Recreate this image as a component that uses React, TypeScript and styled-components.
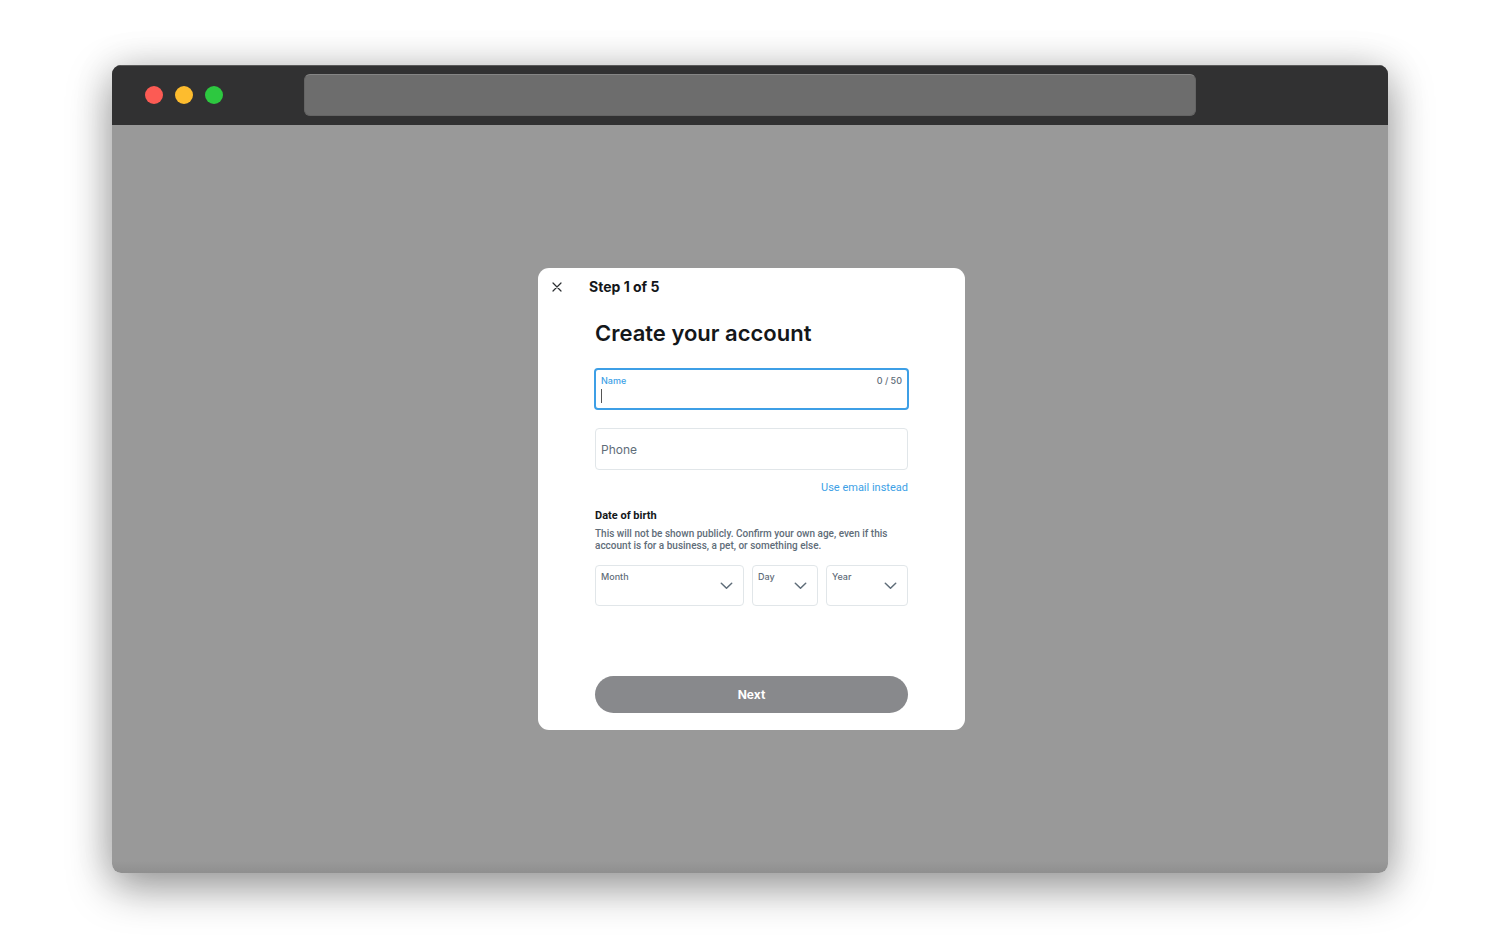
import React from "react";
import styled, { createGlobalStyle } from "styled-components";

const blue = "#3d9fe6";
const ink = "#14171a";
const slate = "#5f6d79";
const line = "#e1e6e9";
const copyFont = `Roboto, "Liberation Sans", sans-serif`;

const GlobalStyle = createGlobalStyle`
  *, *::before, *::after { box-sizing: border-box; }
  body {
    margin: 0;
    background: #fff;
    color: ${ink};
    font-family: Inter, "Liberation Sans", sans-serif;
  }
  button, input, select { font: inherit; color: inherit; }
`;

const Page = styled.div`
  min-height: 100vh;
  display: flex;
  padding: 65px 112px;
`;

const BrowserWindow = styled.div`
  flex: 1;
  display: flex;
  flex-direction: column;
  overflow: hidden;
  border-radius: 9px;
  background: linear-gradient(to top, #8f8f8f, #999 12px);
  box-shadow: 0 14px 44px rgba(0, 0, 0, 0.4), 0 0 40px rgba(0, 0, 0, 0.1);
`;

const TitleBar = styled.header`
  display: grid;
  grid-template-columns: 192px 1fr 192px;
  align-items: center;
  height: 60px;
  padding-bottom: 1px;
  background: #313132;
  box-shadow: inset 0 1px #5a5a5a;
`;

const Lights = styled.div`
  display: flex;
  gap: 12px;
  padding-left: 33px;
`;

const Light = styled.span<{ $color: string }>`
  width: 18px;
  height: 18px;
  border-radius: 50%;
  background: ${(p) => p.$color};
`;

const AddressBar = styled.input`
  width: 100%;
  height: 42px;
  padding: 0 16px;
  border: 1px solid #646464;
  border-top-color: #858585;
  border-radius: 6px;
  background: #6d6d6d;
  outline: none;
`;

const Stage = styled.main`
  flex: 1;
  display: flex;
  align-items: center;
  justify-content: center;
  padding-left: 3px;
`;

const Dialog = styled.section`
  width: 427px;
  padding-bottom: 17px;
  border-radius: 11px;
  background: #fff;
`;

const DialogHeader = styled.div`
  display: flex;
  align-items: center;
  gap: 23px;
  height: 38px;
  padding-left: 10px;
`;

const CloseButton = styled.button`
  display: flex;
  padding: 4px;
  border: 0;
  background: none;
  cursor: pointer;
`;

const Step = styled.h2`
  margin: 0;
  font-size: 14px;
  line-height: 20px;
  font-weight: 700;
`;

const Form = styled.form`
  display: flex;
  flex-direction: column;
  padding: 13px 57px 0;
`;

const Title = styled.h1`
  margin: 0 0 21px;
  font-size: 22px;
  line-height: 28px;
  font-weight: 600;
`;

const ActiveField = styled.div`
  display: flex;
  flex-direction: column;
  height: 42px;
  margin: 0 -1px;
  padding: 5px 5px 3px;
  border: 2px solid ${blue};
  border-radius: 4px;
`;

const FieldTop = styled.div`
  display: flex;
  justify-content: space-between;
`;

const Label = styled.label<{ $active?: boolean }>`
  font-size: 9px;
  line-height: 12px;
  font-weight: 500;
  color: ${(p) => (p.$active ? blue : slate)};
`;

const Counter = styled.span`
  font-size: 9px;
  line-height: 12px;
  font-weight: 500;
  color: ${slate};
`;

const Entry = styled.div`
  display: flex;
  align-items: center;
  flex: 1;
`;

const Caret = styled.span`
  width: 1px;
  height: 14px;
  background: #555;
`;

const TextInput = styled.input`
  flex: 1;
  min-width: 0;
  height: 16px;
  padding: 0;
  border: 0;
  outline: none;
  background: none;
  font-size: 12px;
  caret-color: transparent;
`;

const PhoneInput = styled.input`
  height: 42px;
  margin-top: 18px;
  padding: 0 5px;
  border: 1px solid ${line};
  border-radius: 4px;
  outline: none;
  font-size: 12px;
  &::placeholder { color: ${slate}; opacity: 1; }
`;

const SwapLink = styled.a`
  align-self: flex-end;
  margin-top: 11px;
  font-family: ${copyFont};
  font-size: 11px;
  line-height: 14px;
  color: ${blue};
  text-decoration: none;
`;

const BirthGroup = styled.fieldset`
  min-width: 0;
  margin: 14px 0 0;
  padding: 0;
  border: 0;
  font-family: ${copyFont};
`;

const Legend = styled.legend`
  padding: 0;
  font-size: 11px;
  line-height: 14px;
  font-weight: 700;
`;

const Hint = styled.p`
  margin: 5px 0 13px;
  font-size: 10px;
  line-height: 12px;
  font-weight: 500;
  color: ${slate};
`;

const Selects = styled.div`
  display: grid;
  grid-template-columns: 149fr 66fr 82fr;
  gap: 8px;
  font-family: Inter, "Liberation Sans", sans-serif;
`;

const SelectBox = styled.div`
  display: grid;
  grid-template: 1fr / 1fr auto;
  height: 41px;
  border: 1px solid ${line};
  border-radius: 4px;

  label {
    grid-area: 1 / 1;
    padding: 5px 0 0 5px;
    pointer-events: none;
  }
  select {
    grid-area: 1 / 1 / 2 / 3;
    width: 100%;
    height: 100%;
    padding: 14px 5px 0;
    border: 0;
    outline: none;
    appearance: none;
    background: none;
    font-size: 12px;
  }
  svg {
    grid-area: 1 / 2;
    align-self: center;
    margin-right: 10px;
    pointer-events: none;
  }
`;

const NextButton = styled.button`
  height: 37px;
  margin-top: 70px;
  border: 0;
  border-radius: 19px;
  background: #88898c;
  color: #fff;
  font-size: 12px;
  font-weight: 700;
`;

const months = [
  "January", "February", "March", "April", "May", "June", "July",
  "August", "September", "October", "November", "December",
];
const days = Array.from({ length: 31 }, (_, i) => String(i + 1));
const years = Array.from({ length: 100 }, (_, i) => String(2022 - i));

function DatePart({ id, label, options }: { id: string; label: string; options: string[] }) {
  return (
    <SelectBox>
      <select id={id} defaultValue="">
        <option value="" />
        {options.map((o) => (
          <option key={o}>{o}</option>
        ))}
      </select>
      <Label htmlFor={id}>{label}</Label>
      <svg width="13" height="9" viewBox="0 0 13 9" fill="none" stroke="#5f6d79" strokeWidth="1.5" strokeLinecap="round" strokeLinejoin="round">
        <path d="M1.3 2.2 6.5 7.2 11.7 2.2" />
      </svg>
    </SelectBox>
  );
}

export default function App() {
  return (
    <Page>
      <GlobalStyle />
      <BrowserWindow>
        <TitleBar>
          <Lights>
            <Light $color="#fc5b54" />
            <Light $color="#fdbc2e" />
            <Light $color="#2dc840" />
          </Lights>
          <AddressBar type="text" aria-label="Address" />
        </TitleBar>
        <Stage>
          <Dialog role="dialog" aria-labelledby="title">
            <DialogHeader>
              <CloseButton type="button" aria-label="Close">
                <svg width="10" height="10" viewBox="0 0 10 10" fill="none" stroke="#2b2e31" strokeWidth="1.2" strokeLinecap="round">
                  <path d="M1 1 9 9M9 1 1 9" />
                </svg>
              </CloseButton>
              <Step>Step 1 of 5</Step>
            </DialogHeader>
            <Form onSubmit={(e) => e.preventDefault()}>
              <Title id="title">Create your account</Title>
              <ActiveField>
                <FieldTop>
                  <Label htmlFor="name" $active>Name</Label>
                  <Counter>0 / 50</Counter>
                </FieldTop>
                <Entry>
                  <Caret />
                  <TextInput id="name" type="text" maxLength={50} />
                </Entry>
              </ActiveField>
              <PhoneInput type="tel" placeholder="Phone" aria-label="Phone" />
              <SwapLink href="#email">Use email instead</SwapLink>
              <BirthGroup>
                <Legend>Date of birth</Legend>
                <Hint>
                  This will not be shown publicly. Confirm your own age, even if this account is for a business, a
                  pet, or something else.
                </Hint>
                <Selects>
                  <DatePart id="month" label="Month" options={months} />
                  <DatePart id="day" label="Day" options={days} />
                  <DatePart id="year" label="Year" options={years} />
                </Selects>
              </BirthGroup>
              <NextButton type="submit">Next</NextButton>
            </Form>
          </Dialog>
        </Stage>
      </BrowserWindow>
    </Page>
  );
}
